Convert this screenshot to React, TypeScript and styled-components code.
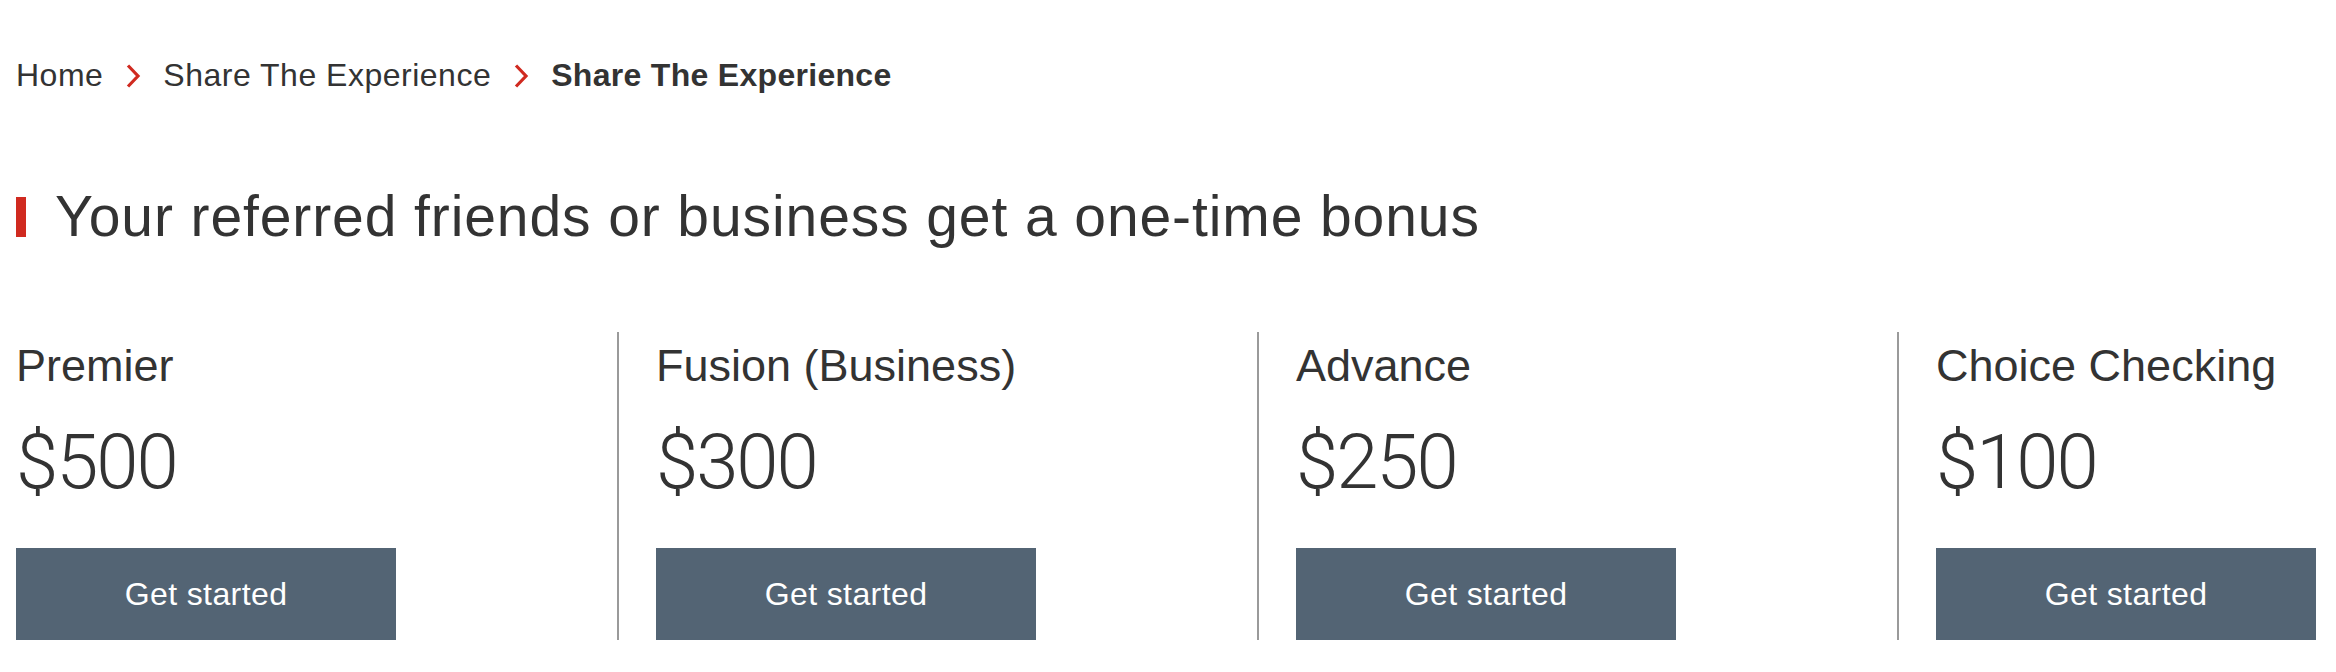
import React from "react";
import styled, { createGlobalStyle } from "styled-components";

const GlobalStyle = createGlobalStyle`
  html, body {
    margin: 0;
    padding: 0;
    background: #ffffff;
    overflow: hidden;
  }
  body {
    font-family: "Liberation Sans", Arial, sans-serif;
    color: #333333;
  }
`;

const Page = styled.main`
  padding: 59px 0 0 16px;
  display: flex;
  flex-direction: column;
`;

const Breadcrumbs = styled.nav`
  display: flex;
  align-items: center;
  gap: 22px;
  font-size: 32px;
  line-height: 32px;
  letter-spacing: 0.5px;
  color: #333333;
`;

const Crumb = styled.span<{ $current?: boolean }>`
  font-weight: ${(p) => (p.$current ? 700 : 400)};
  letter-spacing: ${(p) => (p.$current ? "0.3px" : "0.5px")};
  white-space: nowrap;
`;

const Chevron = styled.svg`
  width: 16px;
  height: 24px;
  flex: 0 0 auto;
  margin-top: 2px;
`;

const Heading = styled.h1`
  margin: 97px 0 0 0;
  display: flex;
  align-items: center;
  gap: 29px;
  font-size: 57px;
  line-height: 56px;
  letter-spacing: 0.9px;
  font-weight: 400;
  color: #333333;
  white-space: nowrap;
`;

const RedBar = styled.span`
  width: 10px;
  height: 40px;
  background: #d02a20;
  flex: 0 0 auto;
  margin-top: 2px;
`;

const Offers = styled.section`
  display: flex;
  margin-top: 88px;
`;

const Offer = styled.article<{ $first?: boolean }>`
  box-sizing: border-box;
  flex: 0 0 auto;
  width: ${(p) => (p.$first ? "601px" : "640px")};
  padding: 11px 0 0 ${(p) => (p.$first ? "0" : "37px")};
  border-left: ${(p) => (p.$first ? "none" : "2px solid #9a9a9a")};
  display: flex;
  flex-direction: column;
  align-items: flex-start;
`;

const OfferTitle = styled.h2`
  margin: 0;
  font-size: 45px;
  line-height: 45px;
  font-weight: 400;
  color: #333333;
  white-space: nowrap;
`;

const Amount = styled.div`
  margin-top: 36px;
  font-family: Roboto, "Liberation Sans", sans-serif;
  font-weight: 300;
  font-size: 76px;
  line-height: 76px;
  letter-spacing: -2px;
  color: #333333;
`;

const StartButton = styled.button`
  margin-top: 48px;
  width: 380px;
  height: 92px;
  border: none;
  background: #536474;
  color: #ffffff;
  font-family: "Liberation Sans", Arial, sans-serif;
  font-size: 32px;
  letter-spacing: 0.4px;
  padding: 0;
  cursor: pointer;
`;

const offers = [
  { name: "Premier", amount: "$500" },
  { name: "Fusion (Business)", amount: "$300" },
  { name: "Advance", amount: "$250" },
  { name: "Choice Checking", amount: "$100" },
];

const ChevronIcon = () => (
  <Chevron viewBox="0 0 16 24" aria-hidden="true">
    <path d="M3 1.5 L13 12 L3 22.5" fill="none" stroke="#d02a20" strokeWidth="3.2" />
  </Chevron>
);

export default function App() {
  return (
    <>
      <GlobalStyle />
      <Page>
        <Breadcrumbs aria-label="Breadcrumb">
          <Crumb>Home</Crumb>
          <ChevronIcon />
          <Crumb>Share The Experience</Crumb>
          <ChevronIcon />
          <Crumb $current>Share The Experience</Crumb>
        </Breadcrumbs>
        <Heading>
          <RedBar />
          Your referred friends or business get a one-time bonus
        </Heading>
        <Offers>
          {offers.map((o, i) => (
            <Offer key={o.name} $first={i === 0}>
              <OfferTitle>{o.name}</OfferTitle>
              <Amount>{o.amount}</Amount>
              <StartButton>Get started</StartButton>
            </Offer>
          ))}
        </Offers>
      </Page>
    </>
  );
}
